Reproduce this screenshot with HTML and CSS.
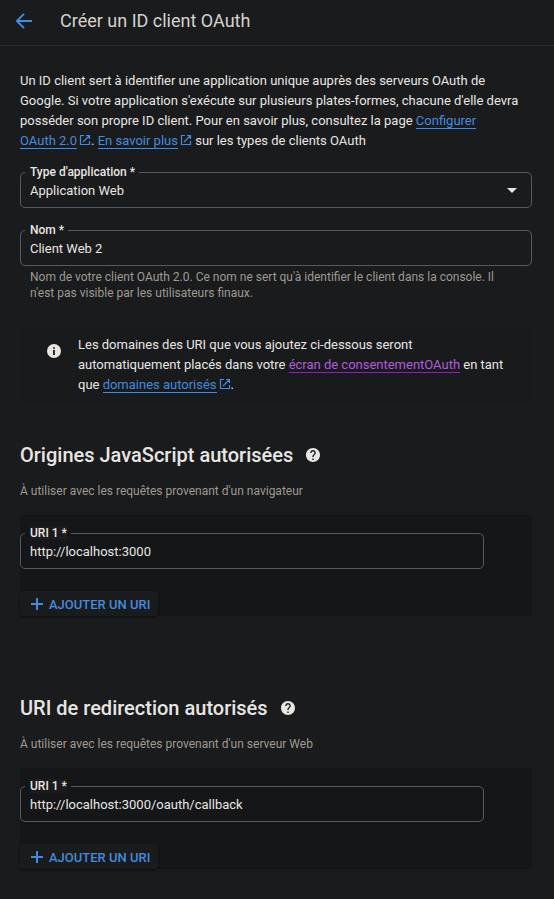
FILE: index.html
```html
<!DOCTYPE html>
<html lang="fr">
<head>
<meta charset="utf-8">
<title>Créer un ID client OAuth</title>
<link rel="stylesheet" href="styles.css">
</head>
<body>
<svg class="sprite" aria-hidden="true">
  <symbol id="external" viewBox="0 0 12 12"><path d="M5 1.500H1.500V10.500H10.500V7M7 1.500H10.500V5M10.500 1.500L4 8" fill="none" stroke="currentColor" stroke-width="1.200"/></symbol>
  <symbol id="help" viewBox="2 2 20 20"><path fill="currentColor" d="M12 2C6.480 2 2 6.480 2 12s4.480 10 10 10 10-4.480 10-10S17.520 2 12 2zm1 17h-2v-2h2v2zm2.070-7.750l-.9.920C13.450 12.900 13 13.500 13 15h-2v-.5c0-1.100.45-2.100 1.170-2.830l1.240-1.260c.37-.36.59-.86.59-1.410 0-1.100-.9-2-2-2s-2 .9-2 2H8c0-2.210 1.790-4 4-4s4 1.790 4 4c0 .88-.36 1.680-.93 2.250z"/></symbol>
  <symbol id="plus" viewBox="0 0 12 12"><path d="M6 0V12M0 6H12" stroke="currentColor" stroke-width="2"/></symbol>
</svg>
<header class="topbar">
  <svg class="back" viewBox="0 0 16 16"><path d="M16 8H1.500M8 .8L.9 8L8 15.200" fill="none" stroke="currentColor" stroke-width="1.900"/></svg>
  <h1>Créer un ID client OAuth</h1>
</header>
<main>
  <p class="intro">Un ID client sert à identifier une application unique auprès des serveurs OAuth de<br>Google. Si votre application s'exécute sur plusieurs plates-formes, chacune d'elle devra<br>posséder son propre ID client. Pour en savoir plus, consultez la page <a>Configurer</a><br><a>OAuth 2.0</a><svg class="ext"><use href="#external"/></svg>. <a>En savoir plus</a><svg class="ext"><use href="#external"/></svg> sur les types de clients OAuth</p>

  <div class="field type">
    <span class="label"><span>Type d'application *</span></span>
    <span class="value">Application Web</span>
    <span class="caret"></span>
  </div>
  <div class="field name">
    <span class="label"><span>Nom *</span></span>
    <span class="value">Client Web 2</span>
  </div>
  <p class="hint">Nom de votre client OAuth 2.0. Ce nom ne sert qu'à identifier le client dans la console. Il<br>n'est pas visible par les utilisateurs finaux.</p>

  <div class="notice">
    <svg class="info" viewBox="0 0 14 14"><circle cx="7" cy="7" r="7" fill="#e8e6e3"/><path d="M6.100 3.200h1.800v1.600H6.100zM6.100 6h1.800v4.900H6.100z" fill="#181a1b"/></svg>
    <p>Les domaines des URI que vous ajoutez ci-dessous seront<br>automatiquement placés dans votre <a class="visited">écran de consentementOAuth</a> en tant<br>que <a>domaines autorisés</a><svg class="ext"><use href="#external"/></svg>.</p>
  </div>

  <section>
    <h2>Origines JavaScript autorisées<svg class="help"><use href="#help"/></svg></h2>
    <p class="sub">À utiliser avec les requêtes provenant d'un navigateur</p>
    <div class="panel">
      <div class="field uri">
        <span class="label"><span>URI 1 *</span></span>
        <span class="value">http://localhost:3000</span>
      </div>
      <button class="add"><svg><use href="#plus"/></svg>AJOUTER UN URI</button>
    </div>
  </section>

  <section>
    <h2>URI de redirection autorisés<svg class="help"><use href="#help"/></svg></h2>
    <p class="sub">À utiliser avec les requêtes provenant d'un serveur Web</p>
    <div class="panel">
      <div class="field uri">
        <span class="label"><span>URI 1 *</span></span>
        <span class="value">http://localhost:3000/oauth/callback</span>
      </div>
      <button class="add"><svg><use href="#plus"/></svg>AJOUTER UN URI</button>
    </div>
  </section>
</main>
</body>
</html>
```
FILE: styles.css
```css
* { box-sizing: border-box; }
body {
  margin: 0;
  min-height: 899px;
  background: #1a1b1d;
  color: #e8e6e3;
  font: 400 13px/20px Roboto, "Liberation Sans", sans-serif;
}
h1, h2, p { margin: 0; }
.sprite { display: none; }
.topbar {
  display: flex;
  align-items: center;
  height: 46px;
  padding: 0 16px 4px;
  border-bottom: 1px solid #292b2d;
}
.back { width: 16px; height: 16px; color: #428bdf; }
h1 { margin-left: 28px; font-size: 18px; font-weight: 400; line-height: 24px; color: #d5d2cd; }
main { width: 552px; padding: 25px 20px 0; }
.intro, .notice p { white-space: nowrap; }
.notice p { letter-spacing: -0.01px; }
a { color: #428bdf; border-bottom: 1px solid #428bdf; }
.visited { color: #b559dc; border-color: #8d20b8; }
.ext { width: 12px; height: 12px; margin-left: 2px; color: #428bdf; vertical-align: -1px; }

.field {
  position: relative;
  display: flex;
  align-items: center;
  justify-content: space-between;
  height: 36px;
  padding: 0 14px 0 9px;
  border: 1px solid #545a5d;
  border-radius: 5px;
}
.type { margin-top: 21px; }
.name { margin-top: 22px; }
.value { padding-top: 2px; }
.label {
  position: absolute;
  top: -8px;
  left: 4px;
  padding: 0 4px 0 5px;
  background: #1a1b1d;
  font-size: 12px;
  font-weight: 500;
  line-height: 14px;
}
.caret { border: 5px solid transparent; border-top-color: #e8e6e3; border-bottom: 0; }
.hint {
  margin: 3px 0 0 10px;
  color: #9e9a92;
  font-size: 12px;
  line-height: 16px;
  white-space: nowrap;
}
.notice {
  display: flex;
  height: 79px;
  margin-top: 24px;
  padding: 10px 0 0 27px;
  background: #191a1c;
  border-radius: 3px;
}
.info { flex: none; width: 14px; height: 14px; margin: 9px 17px 0 0; }

section { height: 253px; padding-top: 39px; }
h2 { display: flex; align-items: center; font-size: 20px; font-weight: 500; line-height: 24px; }
.help { width: 14px; height: 14px; margin-left: 13px; }
.sub { margin-top: 16px; color: #9e9a92; font-size: 12px; line-height: 16px; }
.panel { height: 101px; margin-top: 16px; padding-top: 18px; background: #141617; }
.uri { width: 464px; }
.uri .label { background: #141617; }
.uri .label span { display: block; background: #1a1b1d; }
.add {
  display: flex;
  align-items: center;
  width: 138px;
  height: 25px;
  margin-top: 22px;
  padding: 2px 0 0 11px;
  border: 0;
  border-radius: 3px;
  background: #1a1b1d;
  box-shadow: 0 1px 2px #0d0e0f;
  color: #428bdf;
  font: 500 13px/20px Roboto, "Liberation Sans", sans-serif;
  white-space: nowrap;
}
.add svg { flex: none; width: 12px; height: 12px; margin: -1px 6px 0 0; }
```
